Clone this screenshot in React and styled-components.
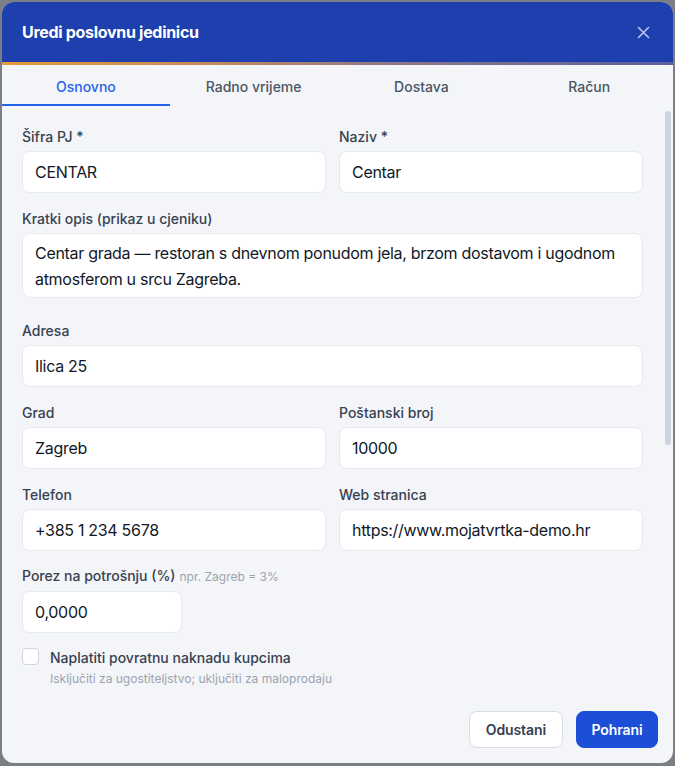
import React from "react";
import styled, { createGlobalStyle } from "styled-components";

const Global = createGlobalStyle`
  html, body { margin: 0; padding: 0; }
  body {
    background: #7b7e85;
    font-family: Inter, "Noto Sans", "Liberation Sans", sans-serif;
    -webkit-font-smoothing: antialiased;
  }
  * { box-sizing: border-box; }
`;

const Page = styled.div`
  width: 675px;
  height: 766px;
  padding: 2px 2px 3px 2px;
`;

const Dialog = styled.div`
  width: 671px;
  height: 761px;
  background: #f3f5f9;
  border-radius: 12px;
  overflow: hidden;
  display: flex;
  flex-direction: column;
  position: relative;
`;

const Header = styled.div`
  height: 60px;
  background: #1e3fae;
  display: flex;
  align-items: center;
  justify-content: space-between;
  padding: 0 22px 0 20px;
`;

const Title = styled.h2`
  margin: 0;
  color: #fff;
  font-size: 16px;
  font-weight: 700;
  letter-spacing: -0.3px;
`;

const Close = styled.button`
  border: 0;
  background: none;
  padding: 0;
  width: 16px;
  height: 16px;
  display: flex;
  align-items: center;
  justify-content: center;
  color: #b9c6ee;
`;

const Accent = styled.div`
  height: 3px;
  background: linear-gradient(90deg, #e89b35 0%, #c48a5a 30%, #8a7788 60%, #5a5f9e 100%);
`;

const Tabs = styled.div`
  display: grid;
  grid-template-columns: repeat(4, 1fr);
  height: 41px;
`;

const Tab = styled.div`
  display: flex;
  align-items: center;
  justify-content: center;
  font-size: 14px;
  font-weight: 500;
  color: ${p => (p.$active ? "#2563eb" : "#4b5563")};
  border-bottom: 2px solid ${p => (p.$active ? "#2563eb" : "transparent")};
  padding-top: 3px;
`;

const Body = styled.div`
  flex: 1;
  position: relative;
  overflow: hidden;
`;

const Scroll = styled.div`
  padding: 21px 30px 0 20px;
  display: flex;
  flex-direction: column;
`;

const Thumb = styled.div`
  position: absolute;
  right: 2px;
  top: 5px;
  width: 6px;
  height: 334px;
  border-radius: 3px;
  background: #ccd4e0;
`;

const Row = styled.div`
  display: grid;
  grid-template-columns: 1fr 1fr;
  column-gap: 13px;
  margin-bottom: ${p => p.$mb ?? 16}px;
`;

const Field = styled.div`
  display: flex;
  flex-direction: column;
  margin-bottom: ${p => p.$mb ?? 0}px;
  width: ${p => p.$w || "auto"};
`;

const Label = styled.label`
  font-size: 14px;
  line-height: 20px;
  font-weight: 500;
  color: #374151;
  margin-bottom: 4px;
  white-space: nowrap;
`;

const Hint = styled.span`
  font-size: 12px;
  font-weight: 400;
  color: #9ca3af;
  margin-left: 4px;
`;

const Input = styled.div`
  height: 42px;
  background: #fff;
  border: 1px solid #e6e9ef;
  border-radius: 8px;
  padding: 0 12px;
  display: flex;
  align-items: center;
  font-size: 16px;
  letter-spacing: -0.3px;
  color: #111827;
`;

const TextArea = styled.div`
  height: 65px;
  background: #fff;
  border: 1px solid #e6e9ef;
  border-radius: 8px;
  padding: 6px 12px;
  font-size: 16px;
  line-height: 26px;
  letter-spacing: -0.3px;
  color: #111827;
`;

const CheckRow = styled.div`
  display: flex;
  gap: 11px;
  margin-top: 15px;
`;

const Box = styled.div`
  width: 17px;
  height: 17px;
  border: 1px solid #d1d5db;
  border-radius: 4px;
  background: #fff;
  flex-shrink: 0;
`;

const CheckText = styled.div`
  display: flex;
  flex-direction: column;
`;

const CheckLabel = styled.div`
  font-size: 14px;
  line-height: 20px;
  font-weight: 500;
  color: #374151;
`;

const CheckHint = styled.div`
  font-size: 12px;
  line-height: 18px;
  color: #9ca3af;
  margin-top: 2px;
`;

const Footer = styled.div`
  display: flex;
  justify-content: flex-end;
  gap: 13px;
  padding: 0 15px 15px 0;
`;

const Button = styled.button`
  height: 37px;
  padding: 0 ${p => (p.$primary ? "14.5px" : "16px")};
  border-radius: 8px;
  font-family: inherit;
  font-size: 14px;
  font-weight: 600;
  letter-spacing: -0.1px;
  border: 1px solid ${p => (p.$primary ? "#1d4ed8" : "#d8dce3")};
  background: ${p => (p.$primary ? "#1d4ed8" : "#fff")};
  color: ${p => (p.$primary ? "#fff" : "#374151")};
`;

export default function App() {
  return (
    <>
      <Global />
      <Page>
        <Dialog>
          <Header>
            <Title>Uredi poslovnu jedinicu</Title>
            <Close aria-label="Zatvori">
              <svg width="13" height="13" viewBox="0 0 13 13" fill="none" stroke="currentColor" strokeWidth="1.6" strokeLinecap="round">
                <path d="M1.5 1.5l10 10M11.5 1.5l-10 10" />
              </svg>
            </Close>
          </Header>
          <Accent />
          <Tabs>
            <Tab $active>Osnovno</Tab>
            <Tab>Radno vrijeme</Tab>
            <Tab>Dostava</Tab>
            <Tab>Račun</Tab>
          </Tabs>
          <Body>
            <Scroll>
              <Row>
                <Field>
                  <Label>Šifra PJ *</Label>
                  <Input>CENTAR</Input>
                </Field>
                <Field>
                  <Label>Naziv *</Label>
                  <Input>Centar</Input>
                </Field>
              </Row>
              <Field $mb={23}>
                <Label>Kratki opis (prikaz u cjeniku)</Label>
                <TextArea>
                  Centar grada — restoran s dnevnom ponudom jela, brzom dostavom i ugodnom atmosferom u srcu Zagreba.
                </TextArea>
              </Field>
              <Field $mb={16}>
                <Label>Adresa</Label>
                <Input>Ilica 25</Input>
              </Field>
              <Row>
                <Field>
                  <Label>Grad</Label>
                  <Input>Zagreb</Input>
                </Field>
                <Field>
                  <Label>Poštanski broj</Label>
                  <Input>10000</Input>
                </Field>
              </Row>
              <Row $mb={15}>
                <Field>
                  <Label>Telefon</Label>
                  <Input>+385 1 234 5678</Input>
                </Field>
                <Field>
                  <Label>Web stranica</Label>
                  <Input>https://www.mojatvrtka-demo.hr</Input>
                </Field>
              </Row>
              <Field $w="160px">
                <Label>
                  Porez na potrošnju (%)<Hint>npr. Zagreb = 3%</Hint>
                </Label>
                <Input>0,0000</Input>
              </Field>
              <CheckRow>
                <Box />
                <CheckText>
                  <CheckLabel>Naplatiti povratnu naknadu kupcima</CheckLabel>
                  <CheckHint>Isključiti za ugostiteljstvo; uključiti za maloprodaju</CheckHint>
                </CheckText>
              </CheckRow>
            </Scroll>
            <Thumb />
          </Body>
          <Footer>
            <Button>Odustani</Button>
            <Button $primary>Pohrani</Button>
          </Footer>
        </Dialog>
      </Page>
    </>
  );
}
